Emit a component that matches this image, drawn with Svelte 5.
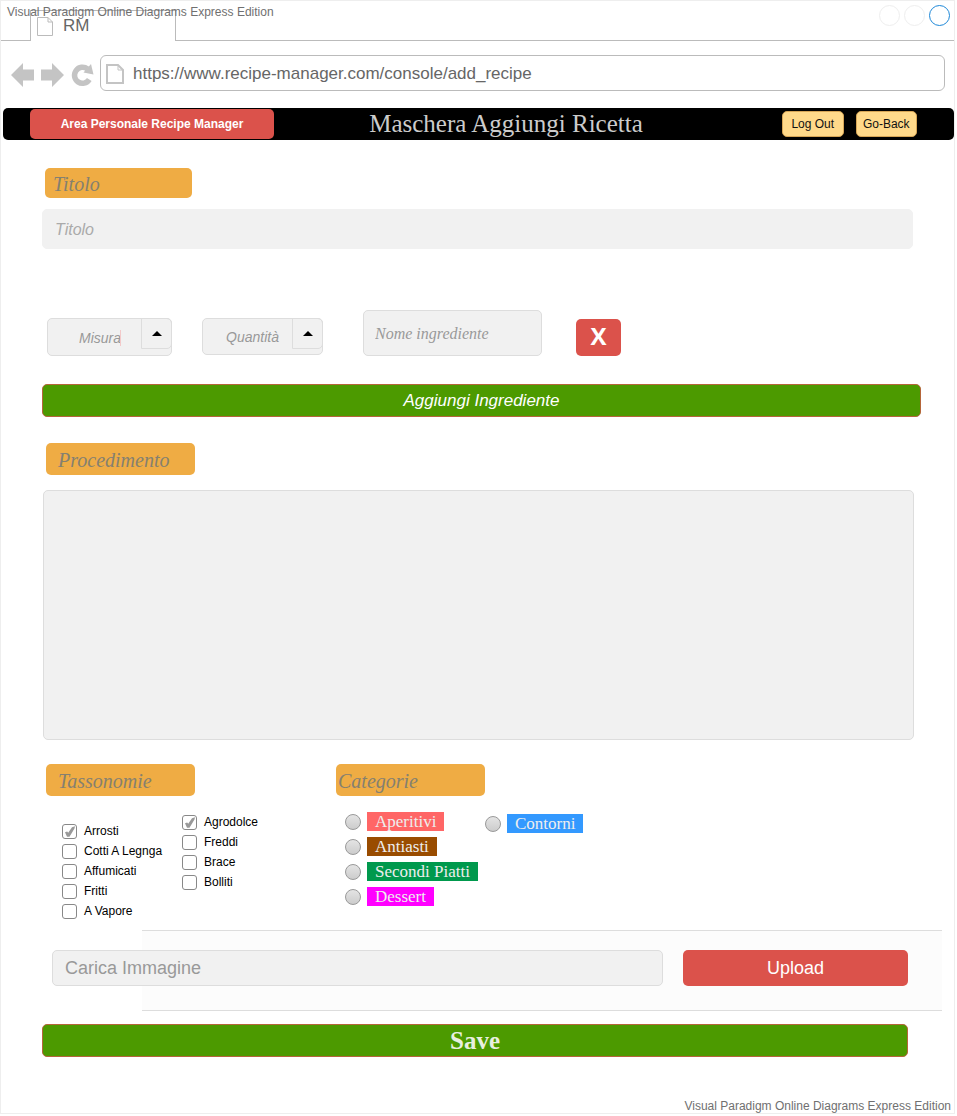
<script>
  const mark = 'Visual Paradigm Online Diagrams Express Edition';

  let firstTags = $state([
    { name: 'Arrosti', on: true },
    { name: 'Cotti A Legnga', on: false },
    { name: 'Affumicati', on: false },
    { name: 'Fritti', on: false },
    { name: 'A Vapore', on: false }
  ]);
  let secondTags = $state([
    { name: 'Agrodolce', on: true },
    { name: 'Freddi', on: false },
    { name: 'Brace', on: false },
    { name: 'Bolliti', on: false }
  ]);

  const mainCategories = [
    { name: 'Aperitivi', tone: 'coral' },
    { name: 'Antiasti', tone: 'brown' },
    { name: 'Secondi Piatti', tone: 'green' },
    { name: 'Dessert', tone: 'magenta' }
  ];
  const sideCategories = [{ name: 'Contorni', tone: 'blue' }];
  let category = $state('');
</script>

{#snippet tagList(tags)}
  {#each tags as tag}
    <label class="check">
      <span class="box">
        <input type="checkbox" bind:checked={tag.on} />
        {#if tag.on}
          <svg width="15" height="15" viewBox="0 0 15 15" aria-hidden="true">
            <path d="M3 8.300 5.200 7.500 6.200 8.800 10 3.300 13 2.300 12.500 4.500 7.500 12.800H5Z" fill="#999" />
          </svg>
        {/if}
      </span>
      {tag.name}
    </label>
  {/each}
{/snippet}

{#snippet categoryList(items)}
  {#each items as item}
    <label class="radio">
      <input type="radio" name="category" value={item.name} bind:group={category} />
      <span class="chip {item.tone}">{item.name}</span>
    </label>
  {/each}
{/snippet}

<div class="page">
  <div class="tabs">
    <span class="mark top-mark">{mark}</span>
    <div class="tab">
      <svg width="16" height="20" viewBox="0 0 16 20" fill="none" stroke="#bbb" aria-hidden="true">
        <path d="M.5 1.5H11L15.5 6V19.5H.5ZM11 1.5V6H15.5" />
      </svg>
      <span>RM</span>
    </div>
    <div class="strip">
      <i class="dot"></i><i class="dot"></i><i class="dot active"></i>
    </div>
  </div>

  <div class="address">
    <div class="nav">
      <svg width="23" height="26" viewBox="0 0 23 26" aria-hidden="true">
        <path d="M0 13 12 1V7.500H23V18.500H12V25Z" fill="#c4c4c4" />
      </svg>
      <svg width="23" height="26" viewBox="0 0 23 26" aria-hidden="true">
        <path d="M23 13 11 1V7.500H0V18.500H11V25Z" fill="#c4c4c4" />
      </svg>
      <svg width="23" height="26" viewBox="0 0 23 26" aria-hidden="true">
        <path d="M16.500 7A8 8 0 1 0 18.300 17.500" fill="none" stroke="#c4c4c4" stroke-width="5.500" />
        <path d="M12.500 10.500 20 2 22.500 12.500Z" fill="#c4c4c4" />
      </svg>
    </div>
    <label class="url">
      <svg width="18" height="20" viewBox="0 0 18 20" fill="none" stroke="#c4c4c4" stroke-width="2" aria-hidden="true">
        <path d="M1 1H12L17 6V19H1Z" /><path d="M12 1V6H17" stroke-width="1" />
      </svg>
      <input type="text" aria-label="URL" value="https://www.recipe-manager.com/console/add_recipe" />
    </label>
  </div>

  <header>
    <button class="area">Area Personale Recipe Manager</button>
    <h1>Maschera Aggiungi Ricetta</h1>
    <div class="account">
      <button>Log Out</button>
      <button class="raised">Go-Back</button>
    </div>
  </header>

  <main>
    <label class="tag-title title-label" for="titolo">Titolo</label>
    <input id="titolo" class="field title-input" type="text" placeholder="Titolo" />

    <div class="ingredient">
      <div class="combo measure">
        <select class="field" aria-label="Misura"><option>Misura</option></select>
        <i class="caret"></i>
        <span class="arrow"><svg width="10" height="5" viewBox="0 0 10 5"><path d="M0 5 5 0 10 5Z" /></svg></span>
      </div>
      <div class="combo quantity">
        <select class="field" aria-label="Quantità"><option>Quantità</option></select>
        <span class="arrow"><svg width="10" height="5" viewBox="0 0 10 5"><path d="M0 5 5 0 10 5Z" /></svg></span>
      </div>
      <input class="field name" type="text" aria-label="Nome ingrediente" placeholder="Nome ingrediente" />
      <button class="remove">X</button>
    </div>

    <button class="wide add">Aggiungi Ingrediente</button>

    <label class="tag-title inset" for="procedimento">Procedimento</label>
    <textarea id="procedimento" class="field"></textarea>

    <div class="choices">
      <fieldset>
        <legend class="tag-title inset">Tassonomie</legend>
        <div class="columns tags">
          <div class="stack lower">{@render tagList(firstTags)}</div>
          <div class="stack">{@render tagList(secondTags)}</div>
        </div>
      </fieldset>
      <fieldset>
        <legend class="tag-title tight">Categorie</legend>
        <div class="columns categories">
          <div class="stack">{@render categoryList(mainCategories)}</div>
          <div class="stack side">{@render categoryList(sideCategories)}</div>
        </div>
      </fieldset>
    </div>

    <div class="upload">
      <div class="panel"></div>
      <div class="upload-row">
        <input class="field" type="text" aria-label="Carica Immagine" placeholder="Carica Immagine" />
        <button>Upload</button>
      </div>
    </div>

    <button class="wide save">Save</button>
  </main>

  <footer class="mark">{mark}</footer>
</div>

<style>
  :global(body) {
    background: #fff;
  }
  * {
    box-sizing: border-box;
  }
  .page {
    margin-right: 2px;
    border: 1px solid #eee;
    font-family: 'Liberation Sans', Arial, sans-serif;
    font-size: 12px;
    color: #000;
  }
  button,
  input,
  select,
  textarea {
    font: inherit;
    margin: 0;
  }
  button {
    padding: 0;
    border: 0;
    border-radius: 5px;
    cursor: pointer;
  }
  .mark {
    font-size: 12px;
    line-height: 14px;
    color: #707070;
    white-space: nowrap;
  }

  .tabs {
    position: relative;
    display: flex;
    align-items: flex-end;
    height: 40px;
  }
  .tabs::before {
    content: '';
    width: 29px;
    border-bottom: 1px solid #bbb;
  }
  .top-mark {
    position: absolute;
    top: 4px;
    left: 6px;
  }
  .tab {
    display: flex;
    align-items: center;
    gap: 10px;
    width: 146px;
    height: 31px;
    padding-left: 6px;
    border: 1px solid #bbb;
    border-bottom: 0;
    font-size: 17px;
    color: #666;
  }
  .strip {
    display: flex;
    flex: 1;
    align-self: stretch;
    justify-content: flex-end;
    gap: 4px;
    padding: 4px 4px 0 0;
    border-bottom: 1px solid #bbb;
  }
  .dot {
    width: 21px;
    height: 21px;
    border: 1px solid #eee;
    border-radius: 50%;
  }
  .dot.active {
    border-color: #1e88d8;
  }

  .address {
    display: flex;
    align-items: center;
    gap: 6px;
    padding: 14px 9px 17px 10px;
  }
  .nav {
    display: flex;
    gap: 7px;
    padding-top: 3px;
  }
  .nav svg {
    display: block;
  }
  .url {
    display: flex;
    flex: 1;
    align-items: center;
    gap: 9px;
    height: 36px;
    padding: 1px 5px 0;
    border: 1px solid #bbb;
    border-radius: 6px;
  }
  .url input {
    flex: 1;
    min-width: 0;
    padding: 0;
    border: 0;
    outline: 0;
    background: none;
    font-size: 17px;
    color: #666;
  }

  header {
    display: grid;
    grid-template-columns: 244px 1fr 135px;
    align-items: center;
    height: 32px;
    margin: 0 0 28px 2px;
    padding: 0 37px 0 27px;
    border-radius: 5px;
    background: #000;
  }
  .area {
    height: 30px;
    background: #db524b;
    color: #fff;
    font-weight: bold;
  }
  h1 {
    margin: 0 0 0 -44px;
    font: 25px/30px 'Liberation Serif', 'Times New Roman', serif;
    color: #ccc;
    text-align: center;
  }
  .account {
    display: flex;
    align-items: center;
    gap: 12px;
  }
  .account button {
    flex: 1;
    height: 26px;
    border: 1px solid #d6a556;
    background: #ffd98a;
    color: #111;
  }
  .account .raised {
    margin-bottom: 1px;
  }

  main {
    display: flex;
    flex-direction: column;
    padding: 0 33px 0 41px;
  }
  .field {
    padding: 0 12px;
    border: 1px solid #ddd;
    border-radius: 5px;
    outline: 0;
    background: #f1f1f1;
    color: #999;
  }
  .field::placeholder {
    color: #999;
    opacity: 1;
  }
  .tag-title {
    width: 149px;
    height: 32px;
    margin-left: 4px;
    padding: 0 12px;
    border-radius: 5px;
    background: #efac44;
    font: italic 20px/34px 'Liberation Serif', 'Times New Roman', serif;
    color: #858070;
  }
  .title-label {
    width: 147px;
    height: 30px;
    margin-left: 3px;
    padding: 0 8px;
    line-height: 32px;
  }
  .tight {
    padding: 0 2px;
  }
  .title-input {
    height: 40px;
    margin: 11px 8px 0 0;
    padding-top: 2px;
    border-color: #f1f1f1;
    font-size: 16px;
    font-style: italic;
  }
  .title-input::placeholder {
    color: #aaa;
  }

  .ingredient {
    display: flex;
    align-items: flex-end;
    margin: 61px 0 28px 5px;
  }
  .combo {
    position: relative;
    display: flex;
    height: 38px;
  }
  .combo select {
    width: 100%;
    appearance: none;
    padding: 2px 0 0 31px;
    font-size: 14px;
    font-style: italic;
  }
  .measure {
    width: 125px;
    margin-right: 30px;
  }
  .quantity {
    width: 121px;
    margin-right: 40px;
  }
  .quantity select {
    height: 37px;
    padding: 0 0 0 23px;
  }
  .caret {
    position: absolute;
    top: 12px;
    right: 51px;
    width: 1px;
    height: 16px;
    background: #f3c9c9;
  }
  .arrow {
    position: absolute;
    top: 0;
    right: 0;
    display: grid;
    place-items: center;
    width: 31px;
    height: 31px;
    border: 1px solid #ddd;
    border-radius: 0 5px 5px 0;
    pointer-events: none;
  }
  .name {
    width: 179px;
    height: 46px;
    margin-right: 34px;
    padding: 2px 11px 0;
    font: italic 16px 'Liberation Serif', 'Times New Roman', serif;
  }
  .remove {
    width: 45px;
    height: 37px;
    padding-bottom: 3px;
    background: #db524b;
    color: #fff;
    font: bold 24px/34px 'Open Sans', sans-serif;
  }

  .wide {
    height: 33px;
    border: 1px solid #b5653a;
    background: #4c9a00;
    color: #fff;
  }
  .add {
    margin-bottom: 26px;
    font-size: 17px;
    font-style: italic;
  }
  textarea {
    height: 250px;
    margin: 15px 7px 24px 1px;
    padding: 12px;
    resize: none;
    font-size: 16px;
  }

  .choices {
    display: grid;
    grid-template-columns: 290px 1fr;
    height: 166px;
  }
  fieldset {
    min-width: 0;
    margin: 0;
    padding: 0;
    border: 0;
  }
  .columns {
    display: grid;
    align-items: start;
  }
  .tags {
    grid-template-columns: 120px 1fr;
    padding: 16px 0 0 20px;
  }
  .categories {
    grid-template-columns: 140px 1fr;
    padding: 13px 0 0 13px;
  }
  .lower {
    padding-top: 9px;
  }
  .side {
    padding-top: 2px;
  }
  .check {
    display: flex;
    align-items: center;
    gap: 7px;
    height: 20px;
    white-space: nowrap;
  }
  .box {
    display: grid;
  }
  .box > * {
    grid-area: 1 / 1;
  }
  .box svg {
    pointer-events: none;
  }
  .check input {
    width: 15px;
    height: 15px;
    appearance: none;
    border: 1px solid #888;
    border-radius: 3px;
    background: #fff;
  }
  .radio {
    display: flex;
    align-items: center;
    gap: 6px;
    height: 25px;
  }
  .radio input {
    width: 16px;
    height: 16px;
    appearance: none;
    border: 1px solid #999;
    border-radius: 50%;
    background: linear-gradient(#e4e4e4, #ccc);
  }
  .radio input:checked {
    background: radial-gradient(circle, #555 3px, #ddd 4px);
  }
  .chip {
    height: 19px;
    padding: 0 8px;
    font: 17px/20px 'Liberation Serif', 'Times New Roman', serif;
    color: #eee;
    white-space: nowrap;
  }
  .coral {
    background: #ff6666;
  }
  .brown {
    background: #994c00;
  }
  .green {
    background: #00994d;
  }
  .magenta {
    background: #ff00ff;
  }
  .blue {
    background: #3399ff;
  }

  .upload {
    display: grid;
    margin: 0 -22px 13px 10px;
  }
  .upload > * {
    grid-area: 1 / 1;
  }
  .panel {
    height: 81px;
    margin: 0 1px 0 90px;
    border: solid #ddd;
    border-width: 1px 0;
    background: #fcfcfc;
  }
  .upload-row {
    display: grid;
    grid-template-columns: 1fr 225px;
    align-self: center;
    gap: 20px;
    height: 36px;
    margin: 0 35px 5px 0;
    font-size: 18px;
  }
  .upload-row button {
    background: #db524b;
    color: #fff;
  }
  .save {
    margin-right: 13px;
    padding-top: 1px;
    font: bold 25px/30px 'Liberation Serif', 'Times New Roman', serif;
    color: #e8efdf;
  }
  footer {
    margin-top: 42px;
    padding-right: 3px;
    text-align: right;
  }
</style>
